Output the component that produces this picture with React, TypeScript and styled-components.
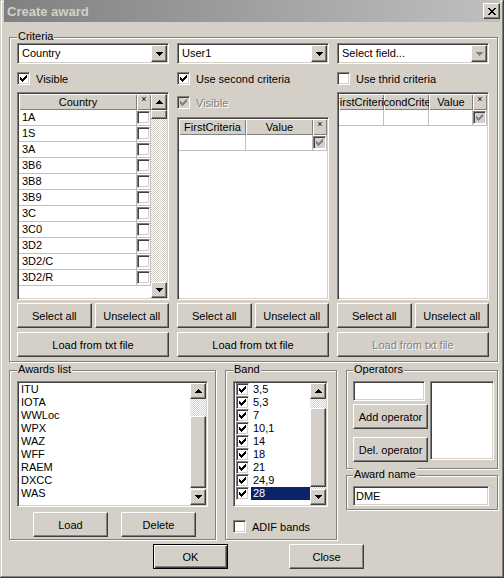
import React from "react";
import styled, { createGlobalStyle, css } from "styled-components";

const FACE = "#d4d0c8";
const SHADOW = "#808080";
const DARK = "#404040";
const FONT = `"Liberation Sans", Arial, sans-serif`;

const GlobalStyle = createGlobalStyle`
  html, body {
    margin: 0;
    padding: 0;
    background: ${FACE};
  }
  body {
    font-family: ${FONT};
    font-size: 11px;
    color: #000;
  }
  * {
    box-sizing: border-box;
  }
`;

const sunken = css`
  border: 1px solid;
  border-color: ${SHADOW} #fff #fff ${SHADOW};
  padding: 1px;
  box-shadow: inset 1px 1px ${DARK}, inset -1px -1px ${FACE};
`;

const raised = css`
  border: 1px solid;
  border-color: #fff ${DARK} ${DARK} #fff;
  box-shadow: inset -1px -1px ${SHADOW}, inset 1px 1px ${FACE};
  background: ${FACE};
`;

const disabledText = css`
  color: ${SHADOW};
  text-shadow: 1px 1px 0 #fff;
`;

/* pixel glyphs */
const CHECK = [
  "......#",
  ".....##",
  "#...###",
  "##.###.",
  "#####..",
  ".###...",
  "..#....",
];
const CLOSE = [
  "##....##",
  ".##..##.",
  "..####..",
  "...##...",
  "..####..",
  ".##..##.",
  "##....##",
];
const ARROW_UP = ["...#...", "..###..", ".#####.", "#######"];
const ARROW_DOWN = [...ARROW_UP].reverse();

const PixelSvg = styled.svg`
  display: block;
  flex: none;
`;

const Pixels: React.FC<{ rows: string[]; color?: string }> = ({ rows, color = "#000" }) => (
  <PixelSvg width={rows[0].length} height={rows.length} shapeRendering="crispEdges">
    {rows.flatMap((row, y) =>
      row
        .split("")
        .map((c, x) =>
          c === "#" ? <rect key={`${x}-${y}`} x={x} y={y} width={1} height={1} fill={color} /> : null
        )
    )}
  </PixelSvg>
);

/* window frame */
const Window = styled.div`
  width: 504px;
  height: 578px;
  padding: 0 4px 4px;
  display: flex;
  flex-direction: column;
  background: ${FACE};
  box-shadow: inset -1px -1px ${DARK}, inset 1px 1px ${FACE}, inset -2px -2px ${SHADOW},
    inset 2px 2px #fff;
  overflow: hidden;
`;

const TitleBar = styled.div`
  height: 22px;
  flex: none;
  display: flex;
  align-items: center;
  justify-content: space-between;
  padding: 0 0 0 3px;
  background: linear-gradient(90deg, #808080, #c0c0c0);
`;

const Title = styled.span`
  font: bold 13px ${FONT};
  color: ${FACE};
`;

const CloseBox = styled.div`
  ${raised}
  width: 17px;
  height: 16px;
  display: flex;
  align-items: center;
  justify-content: center;
`;

const Body = styled.div`
  flex: 1;
  display: flex;
  flex-direction: column;
  padding: 15px 2px 0 5px;
`;

/* group boxes */
const GroupBox = styled.div<{ $pad: string; $width?: number }>`
  display: flex;
  flex-direction: column;
  border: 1px solid ${SHADOW};
  box-shadow: inset 1px 1px #fff, 1px 1px #fff;
  padding: ${(p) => p.$pad};
  ${(p) => (p.$width ? `width: ${p.$width}px; flex: none;` : "")}
`;

const GroupLabel = styled.span<{ $gap: number }>`
  align-self: flex-start;
  height: 13px;
  line-height: 13px;
  margin: -8px 0 ${(p) => p.$gap}px 0;
  padding: 0 1px;
  background: ${FACE};
  white-space: nowrap;
`;

/* criteria */
const Columns = styled.div`
  display: grid;
  grid-template-columns: repeat(3, 152px);
  column-gap: 8px;
`;

const Column = styled.div`
  height: 314px;
  display: flex;
  flex-direction: column;
`;

const Combo = styled.div`
  ${sunken}
  height: 21px;
  flex: none;
  background: #fff;
  display: flex;
`;

const ComboText = styled.span`
  flex: 1;
  padding-left: 3px;
  line-height: 17px;
  white-space: nowrap;
`;

const ComboButton = styled.div`
  ${raised}
  width: 16px;
  display: flex;
  align-items: center;
  justify-content: center;
`;

const CheckRow = styled.div<{ $top: number; $disabled?: boolean }>`
  display: flex;
  align-items: center;
  gap: 6px;
  height: 13px;
  flex: none;
  margin-top: ${(p) => p.$top}px;
  white-space: nowrap;
  ${(p) => (p.$disabled ? disabledText : "")}
`;

const Box = styled.span<{ $disabled?: boolean }>`
  ${sunken}
  width: 13px;
  height: 13px;
  flex: none;
  display: flex;
  align-items: center;
  justify-content: center;
  background: ${(p) => (p.$disabled ? FACE : "#fff")};
`;

const Checkbox: React.FC<{ checked?: boolean; disabled?: boolean }> = ({ checked, disabled }) => (
  <Box $disabled={disabled}>{checked && <Pixels rows={CHECK} color={disabled ? SHADOW : "#000"} />}</Box>
);

const GridFrame = styled.div<{ $top: number }>`
  ${sunken}
  margin-top: ${(p) => p.$top}px;
  flex: 1;
  background: #fff;
  display: flex;
  min-height: 0;
`;

const GridCells = styled.div<{ $cols: string }>`
  flex: 1;
  display: grid;
  grid-template-columns: ${(p) => p.$cols};
  grid-auto-rows: 16px;
  align-content: start;
  overflow: hidden;
`;

const HeadCell = styled.div`
  background: ${FACE};
  box-shadow: inset 1px 1px #fff, inset -1px -1px ${SHADOW};
  display: flex;
  justify-content: center;
  align-items: center;
  overflow: hidden;
  white-space: nowrap;
`;

const HeadMark = styled(HeadCell)`
  align-items: flex-start;
  font-size: 9px;
  line-height: 10px;
`;

const DataCell = styled.div`
  box-shadow: inset -1px -1px #c0c0c0;
  padding-left: 3px;
  line-height: 15px;
  white-space: nowrap;
  overflow: hidden;
`;

const CheckCell = styled.div`
  box-shadow: inset -1px -1px #c0c0c0;
  padding-top: 1px;
`;

/* scroll bars */
const ScrollBar = styled.div`
  width: 16px;
  flex: none;
  display: flex;
  flex-direction: column;
`;

const ScrollButton = styled.div`
  ${raised}
  height: 16px;
  flex: none;
  display: flex;
  align-items: center;
  justify-content: center;
`;

const Track = styled.div<{ $h?: number }>`
  background: repeating-conic-gradient(#fff 0 25%, ${FACE} 0 50%) 0 0 / 2px 2px;
  ${(p) => (p.$h !== undefined ? `height: ${p.$h}px; flex: none;` : "flex: 1;")}
`;

const Thumb = styled.div<{ $h: number }>`
  ${raised}
  height: ${(p) => p.$h}px;
  flex: none;
`;

const VScroll: React.FC<{ before: number; thumb: number }> = ({ before, thumb }) => (
  <ScrollBar>
    <ScrollButton>
      <Pixels rows={ARROW_UP} />
    </ScrollButton>
    {before > 0 && <Track $h={before} />}
    <Thumb $h={thumb} />
    <Track />
    <ScrollButton>
      <Pixels rows={ARROW_DOWN} />
    </ScrollButton>
  </ScrollBar>
);

/* buttons and fields */
const Button = styled.button<{ $w?: number; $mt?: number; $disabled?: boolean }>`
  ${raised}
  height: 25px;
  flex: none;
  padding: 0;
  margin: ${(p) => p.$mt ?? 0}px 0 0;
  width: ${(p) => (p.$w ? `${p.$w}px` : "auto")};
  font: 11px ${FONT};
  color: #000;
  white-space: nowrap;
  ${(p) => (p.$disabled ? disabledText : "")}
`;

const DefaultButton = styled(Button)`
  border: 1px solid #000;
  box-shadow: inset 1px 1px #fff, inset -1px -1px ${DARK}, inset -2px -2px ${SHADOW};
`;

const ButtonPair = styled.div`
  display: grid;
  grid-template-columns: 1fr 1fr;
  column-gap: 3px;
  margin-top: 3px;
`;

const Edit = styled.div<{ $w: number }>`
  ${sunken}
  padding: 1px 1px 1px 2px;
  width: ${(p) => p.$w}px;
  height: 20px;
  flex: none;
  background: #fff;
  line-height: 16px;
`;

/* list boxes */
const ListFrame = styled.div<{ $h: number; $w?: number }>`
  ${sunken}
  background: #fff;
  height: ${(p) => p.$h}px;
  ${(p) => (p.$w ? `width: ${p.$w}px;` : "")}
  flex: none;
  display: flex;
`;

const ListItems = styled.div`
  flex: 1;
  display: flex;
  flex-direction: column;
  overflow: hidden;
`;

const ListItem = styled.div`
  height: 13px;
  line-height: 13px;
  padding-left: 2px;
  flex: none;
`;

const BandItem = styled.div`
  display: flex;
  height: 13px;
  flex: none;
  padding-left: 1px;
`;

const BandText = styled.span<{ $selected?: boolean }>`
  flex: 1;
  margin-left: 2px;
  padding-left: 2px;
  line-height: 13px;
  background: ${(p) => (p.$selected ? "#0a246a" : "transparent")};
  color: ${(p) => (p.$selected ? "#fff" : "#000")};
`;

/* bottom area */
const BottomRow = styled.div`
  display: flex;
  gap: 9px;
  margin-top: 8px;
`;

const AwardButtons = styled.div`
  display: flex;
  gap: 13px;
  margin-top: 5px;
  padding-left: 16px;
`;

const RightStack = styled.div`
  width: 152px;
  flex: none;
  display: flex;
  flex-direction: column;
  gap: 6px;
`;

const OpRow = styled.div`
  display: flex;
  gap: 2px;
`;

const OpControls = styled.div`
  width: 75px;
  display: flex;
  flex-direction: column;
`;

const Footer = styled.div`
  display: flex;
  gap: 61px;
  margin-top: 4px;
  padding-left: 144px;
`;

const COUNTRIES = ["1A", "1S", "3A", "3B6", "3B8", "3B9", "3C", "3C0", "3D2", "3D2/C", "3D2/R"];
const AWARDS = ["ITU", "IOTA", "WWLoc", "WPX", "WAZ", "WFF", "RAEM", "DXCC", "WAS"];
const BANDS = ["3,5", "5,3", "7", "10,1", "14", "18", "21", "24,9", "28"];

const ComboBox: React.FC<{ text: string; muted?: boolean }> = ({ text, muted }) => (
  <Combo>
    <ComboText>{text}</ComboText>
    <ComboButton>
      <Pixels rows={ARROW_DOWN} color={muted ? SHADOW : "#000"} />
    </ComboButton>
  </Combo>
);

const App: React.FC = () => (
  <>
    <GlobalStyle />
    <Window>
      <TitleBar>
        <Title>{"Create award"}</Title>
        <CloseBox>
          <Pixels rows={CLOSE} />
        </CloseBox>
      </TitleBar>
      <Body>
        <GroupBox $pad={"0 8px 4px 7px"}>
          <GroupLabel $gap={0}>{"Criteria"}</GroupLabel>
          <Columns>
            <Column>
              <ComboBox text={"Country"} />
              <CheckRow $top={8}>
                <Checkbox checked />
                {"Visible"}
              </CheckRow>
              <GridFrame $top={7}>
                <GridCells $cols={"118px 14px"}>
                  <HeadCell>{"Country"}</HeadCell>
                  <HeadMark>{"×"}</HeadMark>
                  {COUNTRIES.map((c) => (
                    <React.Fragment key={c}>
                      <DataCell>{c}</DataCell>
                      <CheckCell>
                        <Checkbox />
                      </CheckCell>
                    </React.Fragment>
                  ))}
                </GridCells>
                <VScroll before={0} thumb={9} />
              </GridFrame>
              <ButtonPair>
                <Button>{"Select all"}</Button>
                <Button>{"Unselect all"}</Button>
              </ButtonPair>
              <Button $mt={4}>{"Load from txt file"}</Button>
            </Column>

            <Column>
              <ComboBox text={"User1"} />
              <CheckRow $top={8}>
                <Checkbox checked />
                {"Use second criteria"}
              </CheckRow>
              <CheckRow $top={11} $disabled>
                <Checkbox checked disabled />
                {"Visible"}
              </CheckRow>
              <GridFrame $top={8}>
                <GridCells $cols={"67px 67px 14px"}>
                  <HeadCell>{"FirstCriteria"}</HeadCell>
                  <HeadCell>{"Value"}</HeadCell>
                  <HeadMark>{"×"}</HeadMark>
                  <DataCell />
                  <DataCell />
                  <CheckCell>
                    <Checkbox checked disabled />
                  </CheckCell>
                </GridCells>
              </GridFrame>
              <ButtonPair>
                <Button>{"Select all"}</Button>
                <Button>{"Unselect all"}</Button>
              </ButtonPair>
              <Button $mt={4}>{"Load from txt file"}</Button>
            </Column>

            <Column>
              <ComboBox text={"Select field..."} muted />
              <CheckRow $top={8}>
                <Checkbox />
                {"Use thrid criteria"}
              </CheckRow>
              <GridFrame $top={7}>
                <GridCells $cols={"45px 45px 44px 14px"}>
                  <HeadCell>{"FirstCriteria"}</HeadCell>
                  <HeadCell>{"SecondCriteria"}</HeadCell>
                  <HeadCell>{"Value"}</HeadCell>
                  <HeadMark>{"×"}</HeadMark>
                  <DataCell />
                  <DataCell />
                  <DataCell />
                  <CheckCell>
                    <Checkbox checked disabled />
                  </CheckCell>
                </GridCells>
              </GridFrame>
              <ButtonPair>
                <Button>{"Select all"}</Button>
                <Button>{"Unselect all"}</Button>
              </ButtonPair>
              <Button $mt={4} $disabled>
                {"Load from txt file"}
              </Button>
            </Column>
          </Columns>
        </GroupBox>

        <BottomRow>
          <GroupBox $pad={"0 7px 2px 7px"} $width={207}>
            <GroupLabel $gap={5}>{"Awards list"}</GroupLabel>
            <ListFrame $h={126}>
              <ListItems>
                {AWARDS.map((a) => (
                  <ListItem key={a}>{a}</ListItem>
                ))}
              </ListItems>
              <VScroll before={17} thumb={72} />
            </ListFrame>
            <AwardButtons>
              <Button $w={75}>{"Load"}</Button>
              <Button $w={75}>{"Delete"}</Button>
            </AwardButtons>
          </GroupBox>

          <GroupBox $pad={"0 8px 6px 7px"} $width={112}>
            <GroupLabel $gap={5}>{"Band"}</GroupLabel>
            <ListFrame $h={126} $w={95}>
              <ListItems>
                {BANDS.map((b) => (
                  <BandItem key={b}>
                    <Checkbox checked />
                    <BandText $selected={b === "28"}>{b}</BandText>
                  </BandItem>
                ))}
              </ListItems>
              <VScroll before={9} thumb={79} />
            </ListFrame>
            <CheckRow $top={13}>
              <Checkbox />
              {"ADIF bands"}
            </CheckRow>
          </GroupBox>

          <RightStack>
            <GroupBox $pad={"0 3px 6px 6px"}>
              <GroupLabel $gap={5}>{"Operators"}</GroupLabel>
              <OpRow>
                <OpControls>
                  <Edit $w={72} />
                  <Button $w={75} $mt={3}>
                    {"Add operator"}
                  </Button>
                  <Button $w={75} $mt={8}>
                    {"Del. operator"}
                  </Button>
                </OpControls>
                <ListFrame $h={79} $w={64} />
              </OpRow>
            </GroupBox>
            <GroupBox $pad={"0 8px 3px 6px"}>
              <GroupLabel $gap={5}>{"Award name"}</GroupLabel>
              <Edit $w={136}>{"DME"}</Edit>
            </GroupBox>
          </RightStack>
        </BottomRow>

        <Footer>
          <DefaultButton $w={75}>{"OK"}</DefaultButton>
          <Button $w={75}>{"Close"}</Button>
        </Footer>
      </Body>
    </Window>
  </>
);

export default App;
